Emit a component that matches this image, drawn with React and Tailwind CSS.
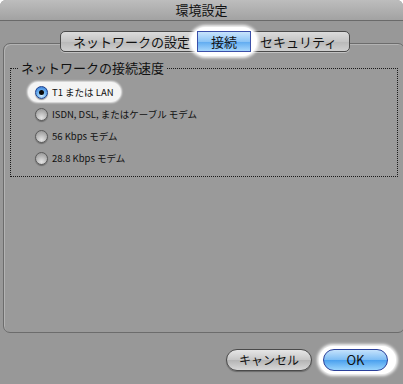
import React, { useState } from 'react';

const jp = { fontFamily: '"Noto Sans CJK JP", "Noto Sans", sans-serif' };

const speeds = [
  'T1 または LAN',
  'ISDN, DSL, またはケーブル モデム',
  '56 Kbps モデム',
  '28.8 Kbps モデム',
];

function Radio({ checked }) {
  if (checked) {
    return (
      <span className="flex h-[13px] w-[13px] shrink-0 items-center justify-center rounded-full border border-[#1c3f8c] bg-[radial-gradient(circle_at_50%_75%,#d8f0ff_0%,#6fb4f2_45%,#2a6fd0_100%)] shadow-[0_1px_1px_rgba(0,0,0,0.4)]">
        <span className="h-[5px] w-[5px] rounded-full bg-[#0a0a0a]" />
      </span>
    );
  }
  return (
    <span className="h-[13px] w-[13px] shrink-0 rounded-full border border-[#5a5a5a] bg-[radial-gradient(circle_at_50%_80%,#e4e4e4_0%,#b4b4b4_55%,#8e8e8e_100%)] shadow-[0_1px_1px_rgba(0,0,0,0.3)]" />
  );
}

export default function App() {
  const [speed, setSpeed] = useState(0);
  const [tab, setTab] = useState(1);
  const tabs = ['ネットワークの設定', '接続', 'セキュリティ'];

  return (
    <div className="h-[384px] w-[403px] overflow-hidden bg-white" style={jp}>
      <div className="flex h-full flex-col overflow-hidden rounded-t-[6px] bg-[#989898]">
        {/* title bar */}
        <div className="flex h-[21px] shrink-0 items-center justify-center border-b border-[#6a6a6a] bg-[linear-gradient(#bdbdbd,#a2a2a2)] text-[13px] text-[#111]">
          環境設定
        </div>

        {/* tabs */}
        <div className="relative z-10 mt-[10px] flex justify-center pl-[7px]">
          <div className="flex h-[21px] items-center rounded-[5px] border border-[#4a4a4a] bg-[linear-gradient(#dcdcdc,#c4c4c4_50%,#b8b8b8_51%,#cfcfcf)] text-[13px] text-[#111] shadow-[0_1px_0_rgba(255,255,255,0.4)]">
            {tabs.map((t, i) =>
              i === tab ? (
                <div key={t} className="flex h-[29px] items-center rounded-full bg-white px-[6px] shadow-[0_0_3px_2px_rgba(255,255,255,0.9)]">
                  <button
                    onClick={() => setTab(i)}
                    className="flex h-[21px] w-[54px] items-center justify-center border border-[#3b4fa8] bg-[linear-gradient(#c8e4fc,#8cc4f6_50%,#5eaaf0_51%,#a6d6fc)] text-[#111]"
                  >
                    {t}
                  </button>
                </div>
              ) : (
                <button key={t} onClick={() => setTab(i)} className={i === 0 ? 'pl-[12px] pr-[1px]' : 'pl-[3px] pr-[12px]'}>
                  {t}
                </button>
              )
            )}
          </div>
        </div>

        {/* tab panel */}
        <div className="-mr-[2px] ml-[3px] -mt-[9px] h-[290px] shrink-0 rounded-[7px] border border-[#6c6c6c] bg-[#9a9a9a] px-[6px] pt-[24px] shadow-[inset_1px_1px_0_rgba(255,255,255,0.25)]">
          <div className="relative h-[109px] border border-dotted border-[#1a1a1a]">
            <div className="absolute -top-[9px] left-[8px] bg-[#9a9a9a] px-[2px] text-[13px] leading-[16px] text-[#111]">
              ネットワークの接続速度
            </div>
            <div className="flex flex-col gap-[2px] pl-[17px] pt-[13px]">
              {speeds.map((s, i) => (
                <button
                  key={s}
                  onClick={() => setSpeed(i)}
                  className={`flex h-[20px] w-fit items-center gap-[4px] rounded-full pl-[7px] pr-[7px] text-[9.5px] text-[#111] ${
                    speed === i ? 'bg-[#f4f4f4] shadow-[0_0_2px_1px_rgba(255,255,255,0.8)]' : ''
                  }`}
                >
                  <Radio checked={speed === i} />
                  <span>{s}</span>
                </button>
              ))}
            </div>
          </div>
        </div>

        {/* buttons */}
        <div className="flex flex-1 items-start justify-end gap-[7px] pr-[7px] pt-[13px]">
          <button className="mt-[3px] flex h-[22px] w-[86px] items-center justify-center rounded-full border border-[#4a4a4a] bg-[linear-gradient(#e6e6e6,#c6c6c6_50%,#b4b4b4_51%,#d8d8d8)] text-[12px] text-[#111] shadow-[0_1px_1px_rgba(0,0,0,0.3)]">
            キャンセル
          </button>
          <div className="flex h-[28px] items-center rounded-full bg-white pl-[4px] pr-[8px] shadow-[0_0_3px_2px_rgba(255,255,255,0.9)]">
            <button className="flex h-[22px] w-[65px] items-center justify-center rounded-full border border-[#2a3f9a] bg-[linear-gradient(#c4e2fc,#7cbcf4_50%,#4aa0ee_51%,#9ad4fc)] text-[13px] text-[#111]">
              OK
            </button>
          </div>
        </div>
      </div>
    </div>
  );
}
